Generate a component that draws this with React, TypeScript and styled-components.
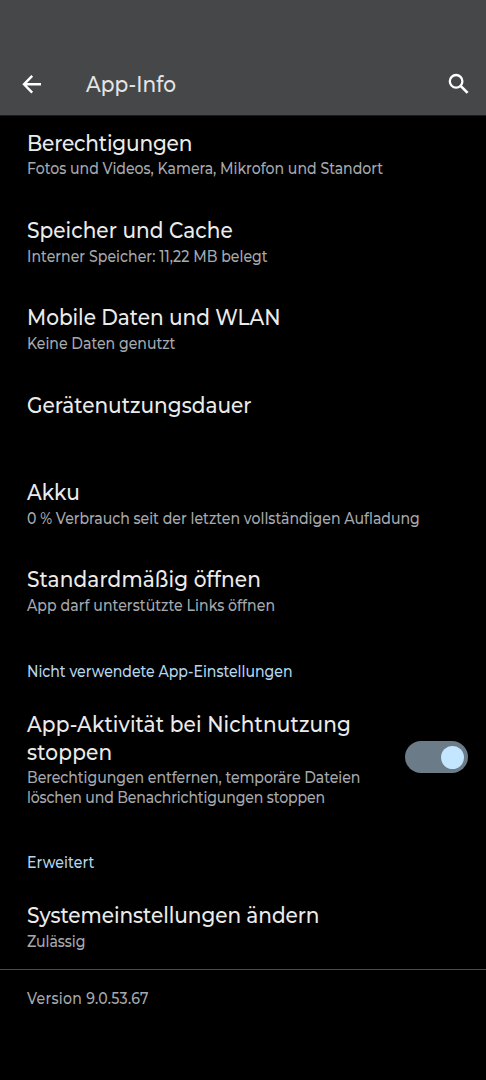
import React from "react";
import styled, { createGlobalStyle } from "styled-components";

const GlobalStyle = createGlobalStyle`
  *, *::before, *::after { box-sizing: border-box; }
  body {
    margin: 0;
    background: #000;
    font-family: "Montserrat", "Inter", "Liberation Sans", sans-serif;
    -webkit-font-smoothing: antialiased;
  }
  h1, h2, h3, p { margin: 0; font-weight: 500; }
`;

const Screen = styled.main`
  display: flex;
  flex-direction: column;
  width: 100%;
  max-width: 486px;
  height: 1080px;
  overflow: hidden;
  background: #000;
`;

const AppBar = styled.header`
  display: flex;
  align-items: flex-end;
  height: 115px;
  flex: none;
  padding: 0 15px 15px 19px;
  background: #464748;
  box-shadow: 0 1px 0 #1c1c1d;
`;

const IconButton = styled.button`
  display: flex;
  flex: none;
  width: 26px;
  height: 32px;
  padding: 0;
  border: 0;
  align-items: center;
  justify-content: center;
  background: none;
  color: #fff;
`;

const BarTitle = styled.h1`
  flex: 1;
  padding-left: 40.5px;
  color: #e4e4e5;
  font-size: 22.5px;
  line-height: 32px;
`;

const List = styled.div`
  display: flex;
  flex-direction: column;
`;

const Row = styled.section<{ $height?: number }>`
  display: flex;
  justify-content: space-between;
  flex: none;
  height: ${(p) => p.$height ?? 87.33}px;
  padding: 14.8px 18px 0 26.5px;
`;

const RowText = styled.div`
  display: flex;
  flex-direction: column;
  flex: 1;
  min-width: 0;
  gap: 2px;
`;

const Title = styled.h2`
  color: #ebebeb;
  font-size: 22.5px;
  line-height: 27.5px;
`;

const Summary = styled.p`
  color: #a6a9ae;
  font-size: 16px;
  line-height: 19.4px;
`;

/* Condensed setting of the typeface: titles and small text have their own width. */
const TextLine = styled.span<{ $tracking: number; $condense: number }>`
  display: block;
  width: max-content;
  white-space: nowrap;
  letter-spacing: ${(p) => p.$tracking}px;
  transform: scaleX(${(p) => p.$condense});
  transform-origin: 0 50%;
`;

const Category = styled.h3`
  flex: none;
  height: 57.4px;
  padding: 22.7px 26.5px 0;
  color: #b5d6ee;
  font-size: 16px;
  line-height: 19.4px;
`;

const Switch = styled.button`
  display: flex;
  align-items: center;
  justify-content: flex-end;
  flex: none;
  width: 63px;
  height: 32px;
  margin-top: 30px;
  padding: 0 4px 0 0;
  border: 0;
  border-radius: 16px;
  background: #6b7b88;
`;

const Thumb = styled.span`
  width: 23px;
  height: 23px;
  border-radius: 50%;
  background: #c4e6ff;
`;

const Footer = styled.footer`
  border-top: 1.5px solid #4c4c4c;
  padding: 18.8px 26.5px 0;
`;

const TITLE_WIDTH = 0.893;
const SMALL_WIDTH = 0.882;

type Line = [text: string, tracking: number];

interface Item {
  title: Line[];
  summary?: Line[];
}

const items: Item[] = [
  { title: [["Berechtigungen", -0.2]], summary: [["Fotos und Videos, Kamera, Mikrofon und Standort", -0.01]] },
  { title: [["Speicher und Cache", 0.05]], summary: [["Interner Speicher: 11,22 MB belegt", 0.03]] },
  { title: [["Mobile Daten und WLAN", -0.04]], summary: [["Keine Daten genutzt", -0.02]] },
  { title: [["Gerätenutzungsdauer", 0]] },
  { title: [["Akku", 0]], summary: [["0 % Verbrauch seit der letzten vollständigen Aufladung", -0.01]] },
  { title: [["Standardmäßig öffnen", 0.12]], summary: [["App darf unterstützte Links öffnen", 0.04]] },
];

const unusedApp: Item = {
  title: [["App-Aktivität bei Nichtnutzung", 0.13], ["stoppen", 0.2]],
  summary: [
    ["Berechtigungen entfernen, temporäre Dateien", -0.06],
    ["löschen und Benachrichtigungen stoppen", -0.18],
  ],
};

const systemSettings: Item = {
  title: [["Systemeinstellungen ändern", -0.08]],
  summary: [["Zulässig", -0.08]],
};

const Lines = ({ lines, condense }: { lines: Line[]; condense: number }) => (
  <>
    {lines.map(([text, tracking]) => (
      <TextLine key={text} $tracking={tracking} $condense={condense}>{text}</TextLine>
    ))}
  </>
);

const ItemText = ({ item }: { item: Item }) => (
  <RowText>
    <Title><Lines lines={item.title} condense={TITLE_WIDTH} /></Title>
    {item.summary && <Summary><Lines lines={item.summary} condense={SMALL_WIDTH} /></Summary>}
  </RowText>
);

const BackIcon = () => (
  <svg width="26" height="32" viewBox="0 0 26 32" fill="none" stroke="currentColor" strokeWidth="2.4">
    <path d="M22 16.3H5.8M13.2 7.9L5 16.3l8.2 8.4" />
  </svg>
);

const SearchIcon = () => (
  <svg width="26" height="32" viewBox="0 0 26 32" fill="none" stroke="currentColor" strokeWidth="2.3">
    <circle cx="11.1" cy="13.3" r="6.3" />
    <path d="M15.6 17.9l7 7" strokeWidth="2.7" />
  </svg>
);

export default function App() {
  return (
    <Screen>
      <GlobalStyle />
      <AppBar>
        <IconButton aria-label="Zurück"><BackIcon /></IconButton>
        <BarTitle><Lines lines={[["App-Info", 0.05]]} condense={TITLE_WIDTH} /></BarTitle>
        <IconButton aria-label="Suchen"><SearchIcon /></IconButton>
      </AppBar>
      <List>
        {items.map((item) => (
          <Row key={item.title[0][0]}><ItemText item={item} /></Row>
        ))}
        <Category><Lines lines={[["Nicht verwendete App-Einstellungen", -0.03]]} condense={SMALL_WIDTH} /></Category>
        <Row $height={133.6}>
          <ItemText item={unusedApp} />
          <Switch role="switch" aria-checked="true" aria-label="App-Aktivität bei Nichtnutzung stoppen">
            <Thumb />
          </Switch>
        </Row>
        <Category><Lines lines={[["Erweitert", 0.12]]} condense={SMALL_WIDTH} /></Category>
        <Row $height={81.6}><ItemText item={systemSettings} /></Row>
      </List>
      <Footer>
        <Summary><Lines lines={[["Version 9.0.53.67", 0.3]]} condense={SMALL_WIDTH} /></Summary>
      </Footer>
    </Screen>
  );
}
